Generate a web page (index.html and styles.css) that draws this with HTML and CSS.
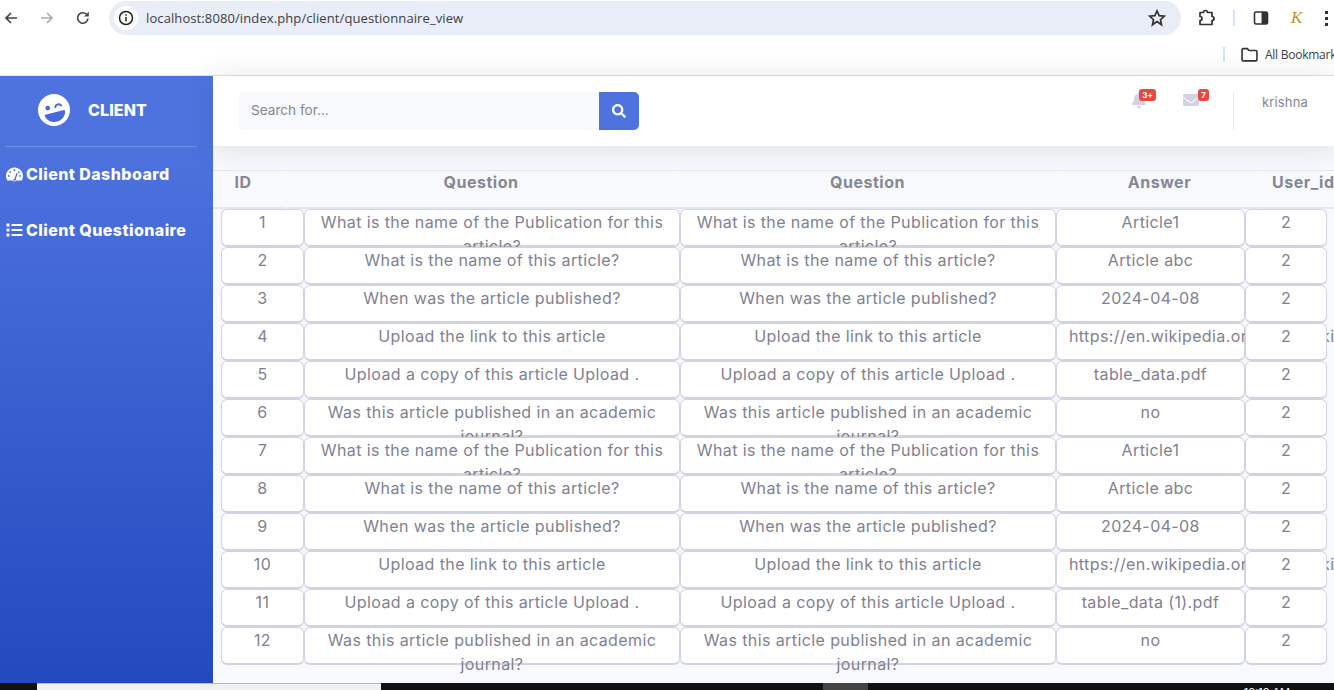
FILE: index.html
```html
<!DOCTYPE html>
<html lang="en">
<head>
<meta charset="utf-8">
<title>Client Questionnaire</title>
<link rel="stylesheet" href="styles.css">
</head>
<body>
<header class="chrome">
  <div class="chrome-top">
    <svg class="nav-ic back" viewBox="0 0 16 16"><path d="M14 8H3M8 3 3 8l5 5" fill="none" stroke="#444" stroke-width="1.7"/></svg>
    <svg class="nav-ic fwd" viewBox="0 0 16 16"><path d="M2 8h11M8 3l5 5-5 5" fill="none" stroke="#aaa" stroke-width="1.7"/></svg>
    <svg class="nav-ic reload" viewBox="0 0 16 16"><path d="M13 8.500A5.200 5.200 0 1 1 11.500 4.300" fill="none" stroke="#444" stroke-width="1.6"/><path d="M13.800 1.800v4.700H9.100z" fill="#444"/></svg>
    <div class="omnibox">
      <span class="info"><svg viewBox="0 0 16 16" width="16" height="16"><circle cx="8" cy="8" r="6.500" fill="none" stroke="#222" stroke-width="1.500"/><path d="M8 7v4.500M8 4.300v1.500" stroke="#222" stroke-width="1.500"/></svg></span>
      <span class="url">localhost:8080/index.php/client/questionnaire_view</span>
      <svg class="star" viewBox="0 0 16 16"><path d="m8 1.700 1.900 4.200 4.600.5-3.400 3.100.9 4.500L8 11.200l-4 2.800.9-4.500L1.500 6.400l4.600-.5z" fill="none" stroke="#333" stroke-width="1.500"/></svg>
    </div>
    <svg class="puzzle" viewBox="0 0 18 18"><path d="M6.500 3.500a2 2 0 0 1 4 0H15v4a2 2 0 0 1 0 4v4H3v-4a2 2 0 0 0 0-4l0-4z" fill="none" stroke="#333" stroke-width="1.700" stroke-linejoin="round"/></svg>
    <span class="sep sep-top"></span>
    <svg class="panel" viewBox="0 0 16 16"><rect x="1.500" y="2" width="13" height="12" rx="1.500" fill="#fff" stroke="#333" stroke-width="1.600"/><rect x="8.500" y="2" width="6" height="12" fill="#333"/></svg>
    <span class="ext-k">K</span>
    <span class="dots"><i></i><i></i><i></i></span>
  </div>
  <div class="chrome-bm">
    <span class="sep sep-bm"></span>
    <svg class="folder" viewBox="0 0 16 14"><path d="M1 2.500a1 1 0 0 1 1-1h4l1.500 1.700H14a1 1 0 0 1 1 1V12a1 1 0 0 1-1 1H2a1 1 0 0 1-1-1z" fill="none" stroke="#333" stroke-width="1.500"/></svg>
    <span class="bm-text">All Bookmarks</span>
  </div>
</header>

<div class="app">
  <nav class="sidebar">
    <div class="brand">
      <svg class="brand-ic" viewBox="0 0 32 32"><circle cx="16" cy="16" r="16" fill="#fff"/><g transform="rotate(-15 16 16)"><circle cx="10.500" cy="12.500" r="2.300" fill="#4668d8"/><path d="M18 13.500c1-2.600 5-2.600 6 0" fill="none" stroke="#4668d8" stroke-width="2" stroke-linecap="round"/><path d="M6.500 18.500h19c.8 0 1 .6.900 1.200C25.500 24.800 21 28 16 28S6.500 24.800 5.600 19.700c-.1-.6.100-1.200.9-1.200z" fill="#4668d8"/></g></svg>
      <span class="brand-text">CLIENT</span>
    </div>
    <hr class="divider">
    <a class="nav-item first">
      <svg class="side-ic" viewBox="0 0 576 512"><path fill="#fff" d="M288 32C129 32 0 161 0 320c0 53 14 102 39 145 6 10 17 15 28 15h442c11 0 22-5 28-15 25-43 39-92 39-145C576 161 447 32 288 32zm0 64a32 32 0 1 1 0 64 32 32 0 0 1 0-64zM96 352a32 32 0 1 1 0-64 32 32 0 0 1 0 64zm48-128a32 32 0 1 1 0-64 32 32 0 0 1 0 64zm246 29-61 184c14 12 23 29 23 49 0 7-1 13-3 19H227c-2-6-3-12-3-19 0-35 28-63 62-64l61-184a22 22 0 0 1 43 15zm42-29a32 32 0 1 1 0-64 32 32 0 0 1 0 64zm48 128a32 32 0 1 1 0-64 32 32 0 0 1 0 64z"/></svg>
      <span>Client Dashboard</span>
    </a>
    <a class="nav-item">
      <svg class="side-ic" viewBox="0 0 512 512"><path fill="#fff" d="M80 368H16a16 16 0 0 0-16 16v64a16 16 0 0 0 16 16h64a16 16 0 0 0 16-16v-64a16 16 0 0 0-16-16zm0-320H16A16 16 0 0 0 0 64v64a16 16 0 0 0 16 16h64a16 16 0 0 0 16-16V64a16 16 0 0 0-16-16zm0 160H16a16 16 0 0 0-16 16v64a16 16 0 0 0 16 16h64a16 16 0 0 0 16-16v-64a16 16 0 0 0-16-16zm416 176H176a16 16 0 0 0-16 16v32a16 16 0 0 0 16 16h320a16 16 0 0 0 16-16v-32a16 16 0 0 0-16-16zm0-320H176a16 16 0 0 0-16 16v32a16 16 0 0 0 16 16h320a16 16 0 0 0 16-16V80a16 16 0 0 0-16-16zm0 160H176a16 16 0 0 0-16 16v32a16 16 0 0 0 16 16h320a16 16 0 0 0 16-16v-32a16 16 0 0 0-16-16z"/></svg>
      <span>Client Questionaire</span>
    </a>
  </nav>

  <main class="content">
    <div class="topbar">
      <form class="search">
        <span class="search-input">Search for...</span>
        <span class="search-btn"><svg viewBox="0 0 512 512" width="14" height="14"><path fill="#fff" d="M505 442.700L405.300 343c-4.500-4.500-10.600-7-17-7H372c27.600-35.300 44-79.700 44-128C416 93.100 322.900 0 208 0S0 93.100 0 208s93.100 208 208 208c48.300 0 92.700-16.400 128-44v16.300c0 6.400 2.500 12.500 7 17l99.700 99.700c9.400 9.400 24.600 9.400 33.900 0l28.300-28.300c9.400-9.400 9.400-24.600.1-34zM208 336c-70.700 0-128-57.200-128-128 0-70.700 57.200-128 128-128 70.700 0 128 57.200 128 128 0 70.700-57.200 128-128 128z"/></svg></span>
      </form>
      <div class="alerts">
        <span class="alert bell">
          <svg viewBox="0 0 448 512" width="14" height="16"><path fill="#d1d3e2" d="M224 512c35.320 0 63.970-28.650 63.970-64H160.030c0 35.350 28.650 64 63.970 64zm215.390-149.710c-19.320-20.760-55.470-51.990-55.470-154.290 0-77.700-54.480-139.900-127.940-155.160V32c0-17.670-14.320-32-31.980-32s-31.980 14.330-31.980 32v20.840C118.560 68.100 64.080 130.300 64.080 208c0 102.300-36.150 133.530-55.470 154.290-6 6.450-8.660 14.160-8.610 21.710.11 16.400 12.980 32 32.100 32h383.800c19.120 0 32-15.600 32.100-32 .05-7.550-2.610-15.270-8.610-21.710z"/></svg>
          <b class="badge badge-wide">3+</b>
        </span>
        <span class="alert mail">
          <svg viewBox="0 0 512 512" width="16" height="16"><path fill="#d1d3e2" d="M502.300 190.800c3.900-3.100 9.700-.2 9.700 4.700V400c0 26.500-21.500 48-48 48H48c-26.500 0-48-21.500-48-48V195.600c0-5 5.700-7.800 9.700-4.700 22.400 17.400 52.100 39.500 154.100 113.600 21.100 15.400 56.700 47.800 92.200 47.600 35.700.3 72-32.800 92.300-47.600 102-74.100 131.600-96.300 154-113.700zM256 320c23.200.4 56.600-29.200 73.400-41.400 132.700-96.300 142.800-104.700 173.400-128.700 5.800-4.500 9.200-11.500 9.200-18.900v-19c0-26.500-21.500-48-48-48H48C21.500 64 0 85.500 0 112v19c0 7.400 3.400 14.300 9.200 18.900 30.600 23.900 40.700 32.400 173.400 128.700 16.800 12.200 50.200 41.800 73.400 41.400z"/></svg>
          <b class="badge badge-small">7</b>
        </span>
        <span class="vr"></span>
        <span class="user">krishna</span>
      </div>
    </div>

    <div class="table-wrap">
      <div class="thead">
        <div class="th th-id">ID</div>
        <div class="th">Question</div>
        <div class="th">Question</div>
        <div class="th">Answer</div>
        <div class="th th-user">User_id</div>
      </div>
      <div class="tbody">
        <div class="tr"><div class="td">1</div><div class="td">What is the name of the Publication for this article?</div><div class="td">What is the name of the Publication for this article?</div><div class="td">Article1</div><div class="td">2</div></div>
        <div class="tr"><div class="td">2</div><div class="td">What is the name of this article?</div><div class="td">What is the name of this article?</div><div class="td">Article abc</div><div class="td">2</div></div>
        <div class="tr"><div class="td">3</div><div class="td">When was the article published?</div><div class="td">When was the article published?</div><div class="td">2024-04-08</div><div class="td">2</div></div>
        <div class="tr"><div class="td">4</div><div class="td">Upload the link to this article</div><div class="td">Upload the link to this article</div><div class="td url-cell">https://en.wikipedia.org/wiki/Wiki</div><div class="td">2</div></div>
        <div class="tr"><div class="td">5</div><div class="td">Upload a copy of this article Upload .</div><div class="td">Upload a copy of this article Upload .</div><div class="td">table_data.pdf</div><div class="td">2</div></div>
        <div class="tr"><div class="td">6</div><div class="td">Was this article published in an academic journal?</div><div class="td">Was this article published in an academic journal?</div><div class="td">no</div><div class="td">2</div></div>
        <div class="tr"><div class="td">7</div><div class="td">What is the name of the Publication for this article?</div><div class="td">What is the name of the Publication for this article?</div><div class="td">Article1</div><div class="td">2</div></div>
        <div class="tr"><div class="td">8</div><div class="td">What is the name of this article?</div><div class="td">What is the name of this article?</div><div class="td">Article abc</div><div class="td">2</div></div>
        <div class="tr"><div class="td">9</div><div class="td">When was the article published?</div><div class="td">When was the article published?</div><div class="td">2024-04-08</div><div class="td">2</div></div>
        <div class="tr"><div class="td">10</div><div class="td">Upload the link to this article</div><div class="td">Upload the link to this article</div><div class="td url-cell">https://en.wikipedia.org/wiki/Wiki</div><div class="td">2</div></div>
        <div class="tr"><div class="td">11</div><div class="td">Upload a copy of this article Upload .</div><div class="td">Upload a copy of this article Upload .</div><div class="td">table_data (1).pdf</div><div class="td">2</div></div>
        <div class="tr"><div class="td">12</div><div class="td">Was this article published in an academic journal?</div><div class="td">Was this article published in an academic journal?</div><div class="td">no</div><div class="td">2</div></div>
      </div>
    </div>
  </main>
</div>

<footer class="taskbar">
  <span class="task task-a"></span>
  <span class="task task-b"></span>
  <span class="task-time">12:12 AM</span>
</footer>
</body>
</html>
```
FILE: styles.css
```css
* { box-sizing: border-box; }
html, body { margin: 0; height: 690px; overflow: hidden; }
body {
  width: 1334px;
  display: flex;
  flex-direction: column;
  background: #fff;
  font-family: Inter, "Liberation Sans", sans-serif;
  color: #858796;
}

/* browser chrome */
.chrome { height: 76px; border-bottom: 1px solid #e3e3e3; flex: none; overflow: hidden; }
.chrome-top { height: 36px; display: flex; align-items: center; position: relative; }
.nav-ic { width: 16px; height: 16px; flex: none; }
.back { margin-left: 3px; }
.fwd { margin-left: 20px; }
.reload { margin-left: 20px; }
.omnibox {
  margin-left: 18px;
  width: 1072px;
  height: 34px;
  border-radius: 17px;
  background: #e9edf7;
  display: flex;
  align-items: center;
  padding-left: 5px;
  flex: none;
}
.info {
  width: 24px; height: 24px; border-radius: 50%; background: #fff;
  display: flex; align-items: center; justify-content: center; flex: none;
}
.url { margin-left: 8px; font: 13px "Open Sans", sans-serif; color: #3c4043; letter-spacing: .1px; }
.star { width: 18px; height: 18px; margin-left: auto; margin-right: 15px; }
.puzzle { width: 18px; height: 18px; margin-left: 16px; flex: none; }
.sep { display: block; width: 2px; background: #d3e3fd; flex: none; }
.sep-top { height: 16px; margin-left: 18px; }
.panel { width: 16px; height: 16px; margin-left: 18px; flex: none; }
.ext-k { margin-left: 22px; font: italic 17px "Liberation Serif", serif; color: #b8932a; width: 14px; flex: none; }
.dots { margin-left: 20px; display: flex; flex-direction: column; gap: 3px; flex: none; }
.dots i { display: block; width: 3px; height: 3px; background: #333; }
.chrome-bm { height: 37px; display: flex; align-items: center; padding-left: 1223px; white-space: nowrap; }
.sep-bm { height: 15px; }
.folder { width: 17px; height: 15px; margin-left: 16px; flex: none; }
.bm-text { margin-left: 7px; font: 12px "Open Sans", sans-serif; color: #3c4043; letter-spacing: -.25px; }

/* layout */
.app { display: flex; height: 607px; flex: none; }
.sidebar {
  width: 213px; flex: none;
  background: linear-gradient(180deg, #4e73df 10%, #224abe 100%);
  color: #fff;
  padding: 0 16px 0 5px;
}
.brand { height: 68px; display: flex; align-items: center; padding-left: 33px; }
.brand-ic { width: 32px; height: 32px; flex: none; }
.brand-text { margin-left: 18px; font-weight: 800; font-size: 16px; letter-spacing: .1px; }
.divider { margin: 2px 0 0; border: 0; border-top: 1px solid rgba(255,255,255,.2); }
.nav-item { display: flex; align-items: center; gap: 3px; height: 24px; margin-top: 32px; font-weight: 800; font-size: 16px; white-space: nowrap; letter-spacing: .42px; }
.nav-item.first { margin-top: 15px; }
.side-ic { width: 17px; height: 16px; flex: none; margin-left: 1px; }

/* content */
.content { flex: 1; min-width: 0; background: #f8f9fc; display: flex; flex-direction: column; }
.topbar {
  height: 70px; flex: none; background: #fff;
  box-shadow: 0 2px 28px rgba(58,59,69,.15);
  display: flex; position: relative;
  padding: 16px 0 0 26px;
}
.search { display: flex; height: 38px; width: 400px; }
.search-input {
  flex: 1; background: #f8f9fc; border-radius: 5px 0 0 5px;
  padding-left: 12px; font-size: 13.6px; line-height: 36px; color: #858796;
}
.search-btn {
  width: 40px; background: #4e73df; border-radius: 0 5px 5px 0;
  display: flex; align-items: center; justify-content: center;
}
.alerts { margin-left: auto; display: flex; align-items: flex-start; position: relative; }
.alert { position: relative; display: block; width: 16px; height: 16px; }
.alert svg { display: block; }
.mail { margin-left: 35px; }
.badge {
  position: absolute; background: #e74a3b; color: #fff; font-size: 8px; font-weight: 700;
  border-radius: 3px; height: 12px; line-height: 12px; text-align: center; top: -3px;
}
.badge-wide { left: 7px; width: 17px; }
.badge-small { left: 15px; width: 11px; }
.vr { display: block; width: 1px; height: 38px; background: #e3e6f0; margin-left: 34px; }
.user { margin-left: 28px; margin-right: 26px; font-size: 13px; line-height: 20px; letter-spacing: .15px; color: #858796; }

/* table */
.table-wrap { margin-top: 24px; flex: 1; overflow: hidden; }
.thead {
  height: 39px; display: grid;
  grid-template-columns: 74px 386px 385px 197px 200px; column-gap: 1px;
}
.th {
  border-top: 1px solid #e3e6f0; border-bottom: 2px solid #e3e6f0;
  text-align: center; font-weight: 700; font-size: 16px; line-height: 23px; white-space: nowrap;
  letter-spacing: .5px;
  color: #858796;
}
.th-id { padding-right: 14px; }
.th-user { text-align: left; padding-left: 13px; }
.tbody { padding-left: 8px; }
.tr {
  height: 38px; display: grid;
  grid-template-columns: 83px 376px 376px 189px 82px;
}
.td {
  min-width: 0; height: 38px;
  background: #fff;
  border: 1px solid #d1d3e2; border-bottom-width: 2px;
  border-radius: 6px;
  padding: 0 12px;
  font-size: 16px; line-height: 24px; text-align: center;
  letter-spacing: .4px;
  color: #7f8190;
}
.url-cell { text-align: left; white-space: nowrap; }

/* os taskbar */
.taskbar { height: 7px; flex: none; background: #111; display: flex; overflow: hidden; position: relative; }
.task { display: block; height: 7px; }
.task-a { margin-left: 37px; width: 344px; background: #f0f0f0; border-top: 1px solid #bbb; }
.task-b { margin-left: 442px; width: 45px; background: #444; }
.task-time { margin-left: auto; margin-right: 44px; margin-top: 2px; color: #fff; font-size: 11px; line-height: 14px; }
```
